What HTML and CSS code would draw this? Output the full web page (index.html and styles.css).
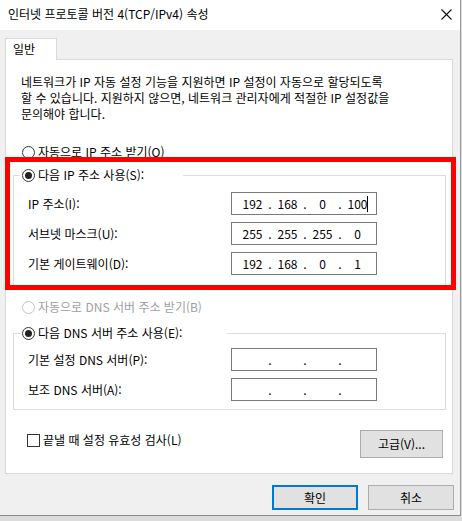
FILE: index.html
```html
<!DOCTYPE html>
<html lang="ko">
<head>
<meta charset="utf-8">
<title>인터넷 프로토콜 버전 4(TCP/IPv4) 속성</title>
<link rel="stylesheet" href="styles.css">
</head>
<body>
<div class="window">
  <div class="titlebar">
    <span class="title">인터넷 프로토콜 버전 4(TCP/IPv4) 속성</span>
    <svg class="close" width="11" height="11" viewBox="0 0 11 11"><path d="M0.5 0.5 L10.5 10.5 M10.5 0.5 L0.5 10.5" stroke="#111" stroke-width="1.1" fill="none"/></svg>
  </div>
  <div class="content">
    <div class="tabs"><div class="tab">일반</div></div>
    <div class="panel">
      <p class="desc">네트워크가 IP 자동 설정 기능을 지원하면 IP 설정이 자동으로 할당되도록<br>할 수 있습니다. 지원하지 않으면, 네트워크 관리자에게 적절한 IP 설정값을<br>문의해야 합니다.</p>
      <div class="option option-auto-ip"><span class="radio"></span><span>자동으로 IP 주소 받기(O)</span></div>
      <fieldset class="group group-ip">
        <legend class="legend legend-ip"><span class="radio checked"></span><span>다음 IP 주소 사용(S):</span></legend>
        <div class="fields">
          <span class="label">IP 주소(I):</span>
          <div class="ipbox"><span class="oct">192</span><span class="dot">.</span><span class="oct">168</span><span class="dot">.</span><span class="oct">0</span><span class="dot">.</span><span class="oct">100<span class="caret"></span></span></div>
          <span class="label">서브넷 마스크(U):</span>
          <div class="ipbox"><span class="oct">255</span><span class="dot">.</span><span class="oct">255</span><span class="dot">.</span><span class="oct">255</span><span class="dot">.</span><span class="oct">0</span></div>
          <span class="label">기본 게이트웨이(D):</span>
          <div class="ipbox"><span class="oct">192</span><span class="dot">.</span><span class="oct">168</span><span class="dot">.</span><span class="oct">0</span><span class="dot">.</span><span class="oct">1</span></div>
        </div>
      </fieldset>
      <div class="option option-auto-dns disabled"><span class="radio"></span><span>자동으로 DNS 서버 주소 받기(B)</span></div>
      <fieldset class="group group-dns">
        <legend class="legend legend-dns"><span class="radio checked"></span><span>다음 DNS 서버 주소 사용(E):</span></legend>
        <div class="fields">
          <span class="label">기본 설정 DNS 서버(P):</span>
          <div class="ipbox"><span class="oct"></span><span class="dot">.</span><span class="oct"></span><span class="dot">.</span><span class="oct"></span><span class="dot">.</span><span class="oct"></span></div>
          <span class="label">보조 DNS 서버(A):</span>
          <div class="ipbox"><span class="oct"></span><span class="dot">.</span><span class="oct"></span><span class="dot">.</span><span class="oct"></span><span class="dot">.</span><span class="oct"></span></div>
        </div>
      </fieldset>
      <div class="check-row">
        <label class="check"><span class="checkbox"></span><span>끝낼 때 설정 유효성 검사(L)</span></label>
        <button class="btn btn-advanced">고급(V)...</button>
      </div>
    </div>
    <div class="buttons">
      <button class="btn btn-ok">확인</button>
      <button class="btn">취소</button>
    </div>
  </div>
  <div class="annotation"></div>
</div>
</body>
</html>
```
FILE: styles.css
```css
html, body {
  margin: 0;
  padding: 0;
}
body {
  background: #dcdcdc;
  font-family: "Noto Sans CJK KR", "Noto Sans", sans-serif;
  font-size: 12px;
  color: #000;
}
.window {
  position: relative;
  width: 460px;
  height: 515px;
  background: #f0f0f0;
  border-right: 1px solid #9a9a9a;
  border-bottom: 1px solid #8a8a8a;
}
.titlebar {
  height: 30px;
  background: #fff;
  display: flex;
  align-items: center;
  justify-content: space-between;
  padding: 0 8px 2px 8px;
  box-sizing: border-box;
}
.title {
  line-height: 16px;
}
.close {
  display: block;
}
.content {
  padding: 8px 0 0 5px;
}
.tabs {
  display: flex;
}
.tab {
  position: relative;
  width: 52px;
  height: 22px;
  box-sizing: border-box;
  border: 1px solid #d9d9d9;
  border-bottom: none;
  background: #fff;
  margin-bottom: -1px;
  padding: 2px 0 0 7px;
  line-height: 16px;
}
.panel {
  width: 448px;
  box-sizing: border-box;
  background: #fff;
  border: 1px solid #d9d9d9;
  padding: 14px 0 15px 0;
}
.desc {
  margin: 0 0 0 15px;
  line-height: 16px;
}
.option {
  display: flex;
  align-items: center;
  height: 16px;
  line-height: 16px;
  padding-left: 16px;
}
.option-auto-ip {
  margin-top: 22px;
}
.option-auto-dns {
  margin-top: 11px;
}
.option.disabled {
  color: #a0a0a0;
}
.option.disabled .radio {
  border-color: #c4c4c4;
}
.radio {
  display: inline-block;
  width: 13px;
  height: 13px;
  box-sizing: border-box;
  border: 1px solid #333;
  border-radius: 50%;
  margin-right: 3px;
  background: #fff;
  position: relative;
}
.radio.checked::after {
  content: "";
  position: absolute;
  left: 2px;
  top: 2px;
  width: 7px;
  height: 7px;
  border-radius: 50%;
  background: #222;
}
.group {
  margin: 7px 6px 0 7px;
  width: 433px;
  box-sizing: border-box;
  border: 1px solid #dcdcdc;
  padding: 0;
  min-width: 0;
}
.group-dns {
  margin-top: 10px;
}
.legend {
  display: flex;
  align-items: center;
  box-sizing: border-box;
  height: 16px;
  line-height: 16px;
  padding: 0 0 0 2px;
  margin-left: 6px;
  background: #fff;
}
.legend-ip {
  width: 163px;
}
.legend-dns {
  width: 207px;
}
.fields {
  display: grid;
  grid-template-columns: 1fr 146px;
  row-gap: 7px;
  align-items: center;
  padding: 9px 68px 12px 14px;
}
.group-dns .fields {
  padding-top: 7px;
  padding-bottom: 8px;
}
.label {
  line-height: 16px;
}
.ipbox {
  display: flex;
  align-items: center;
  height: 23px;
  box-sizing: border-box;
  border: 1px solid #7a7a7a;
  padding-left: 5px;
  line-height: 16px;
  background: #fff;
}
.oct {
  width: 31px;
  text-align: center;
  display: flex;
  justify-content: center;
  align-items: center;
}
.dot {
  width: 4px;
  text-align: center;
}
.caret {
  display: inline-block;
  width: 1px;
  height: 16px;
  background: #000;
  margin-right: -1px;
}
.check-row {
  display: flex;
  justify-content: space-between;
  align-items: flex-start;
  margin-top: 20px;
  padding: 0 9px 0 21px;
}
.check {
  display: flex;
  align-items: center;
  line-height: 16px;
  margin-top: 2px;
}
.checkbox {
  display: inline-block;
  width: 13px;
  height: 13px;
  box-sizing: border-box;
  border: 1px solid #333;
  margin-right: 3px;
  background: #fff;
}
.btn {
  font-family: inherit;
  font-size: 12px;
  color: #000;
  background: #e1e1e1;
  border: 1px solid #adadad;
  border-radius: 0;
  padding: 0;
  width: 86px;
  height: 25px;
  line-height: 16px;
}
.btn-advanced {
  width: 83px;
  height: 28px;
}
.btn-ok {
  border: 2px solid #0078d7;
}
.buttons {
  display: flex;
  justify-content: flex-end;
  gap: 10px;
  margin-top: 11px;
  padding-right: 6px;
}
.annotation {
  position: absolute;
  left: 5px;
  top: 157px;
  width: 451px;
  height: 133px;
  box-sizing: border-box;
  border: 5px solid #ff0000;
  pointer-events: none;
}
```
